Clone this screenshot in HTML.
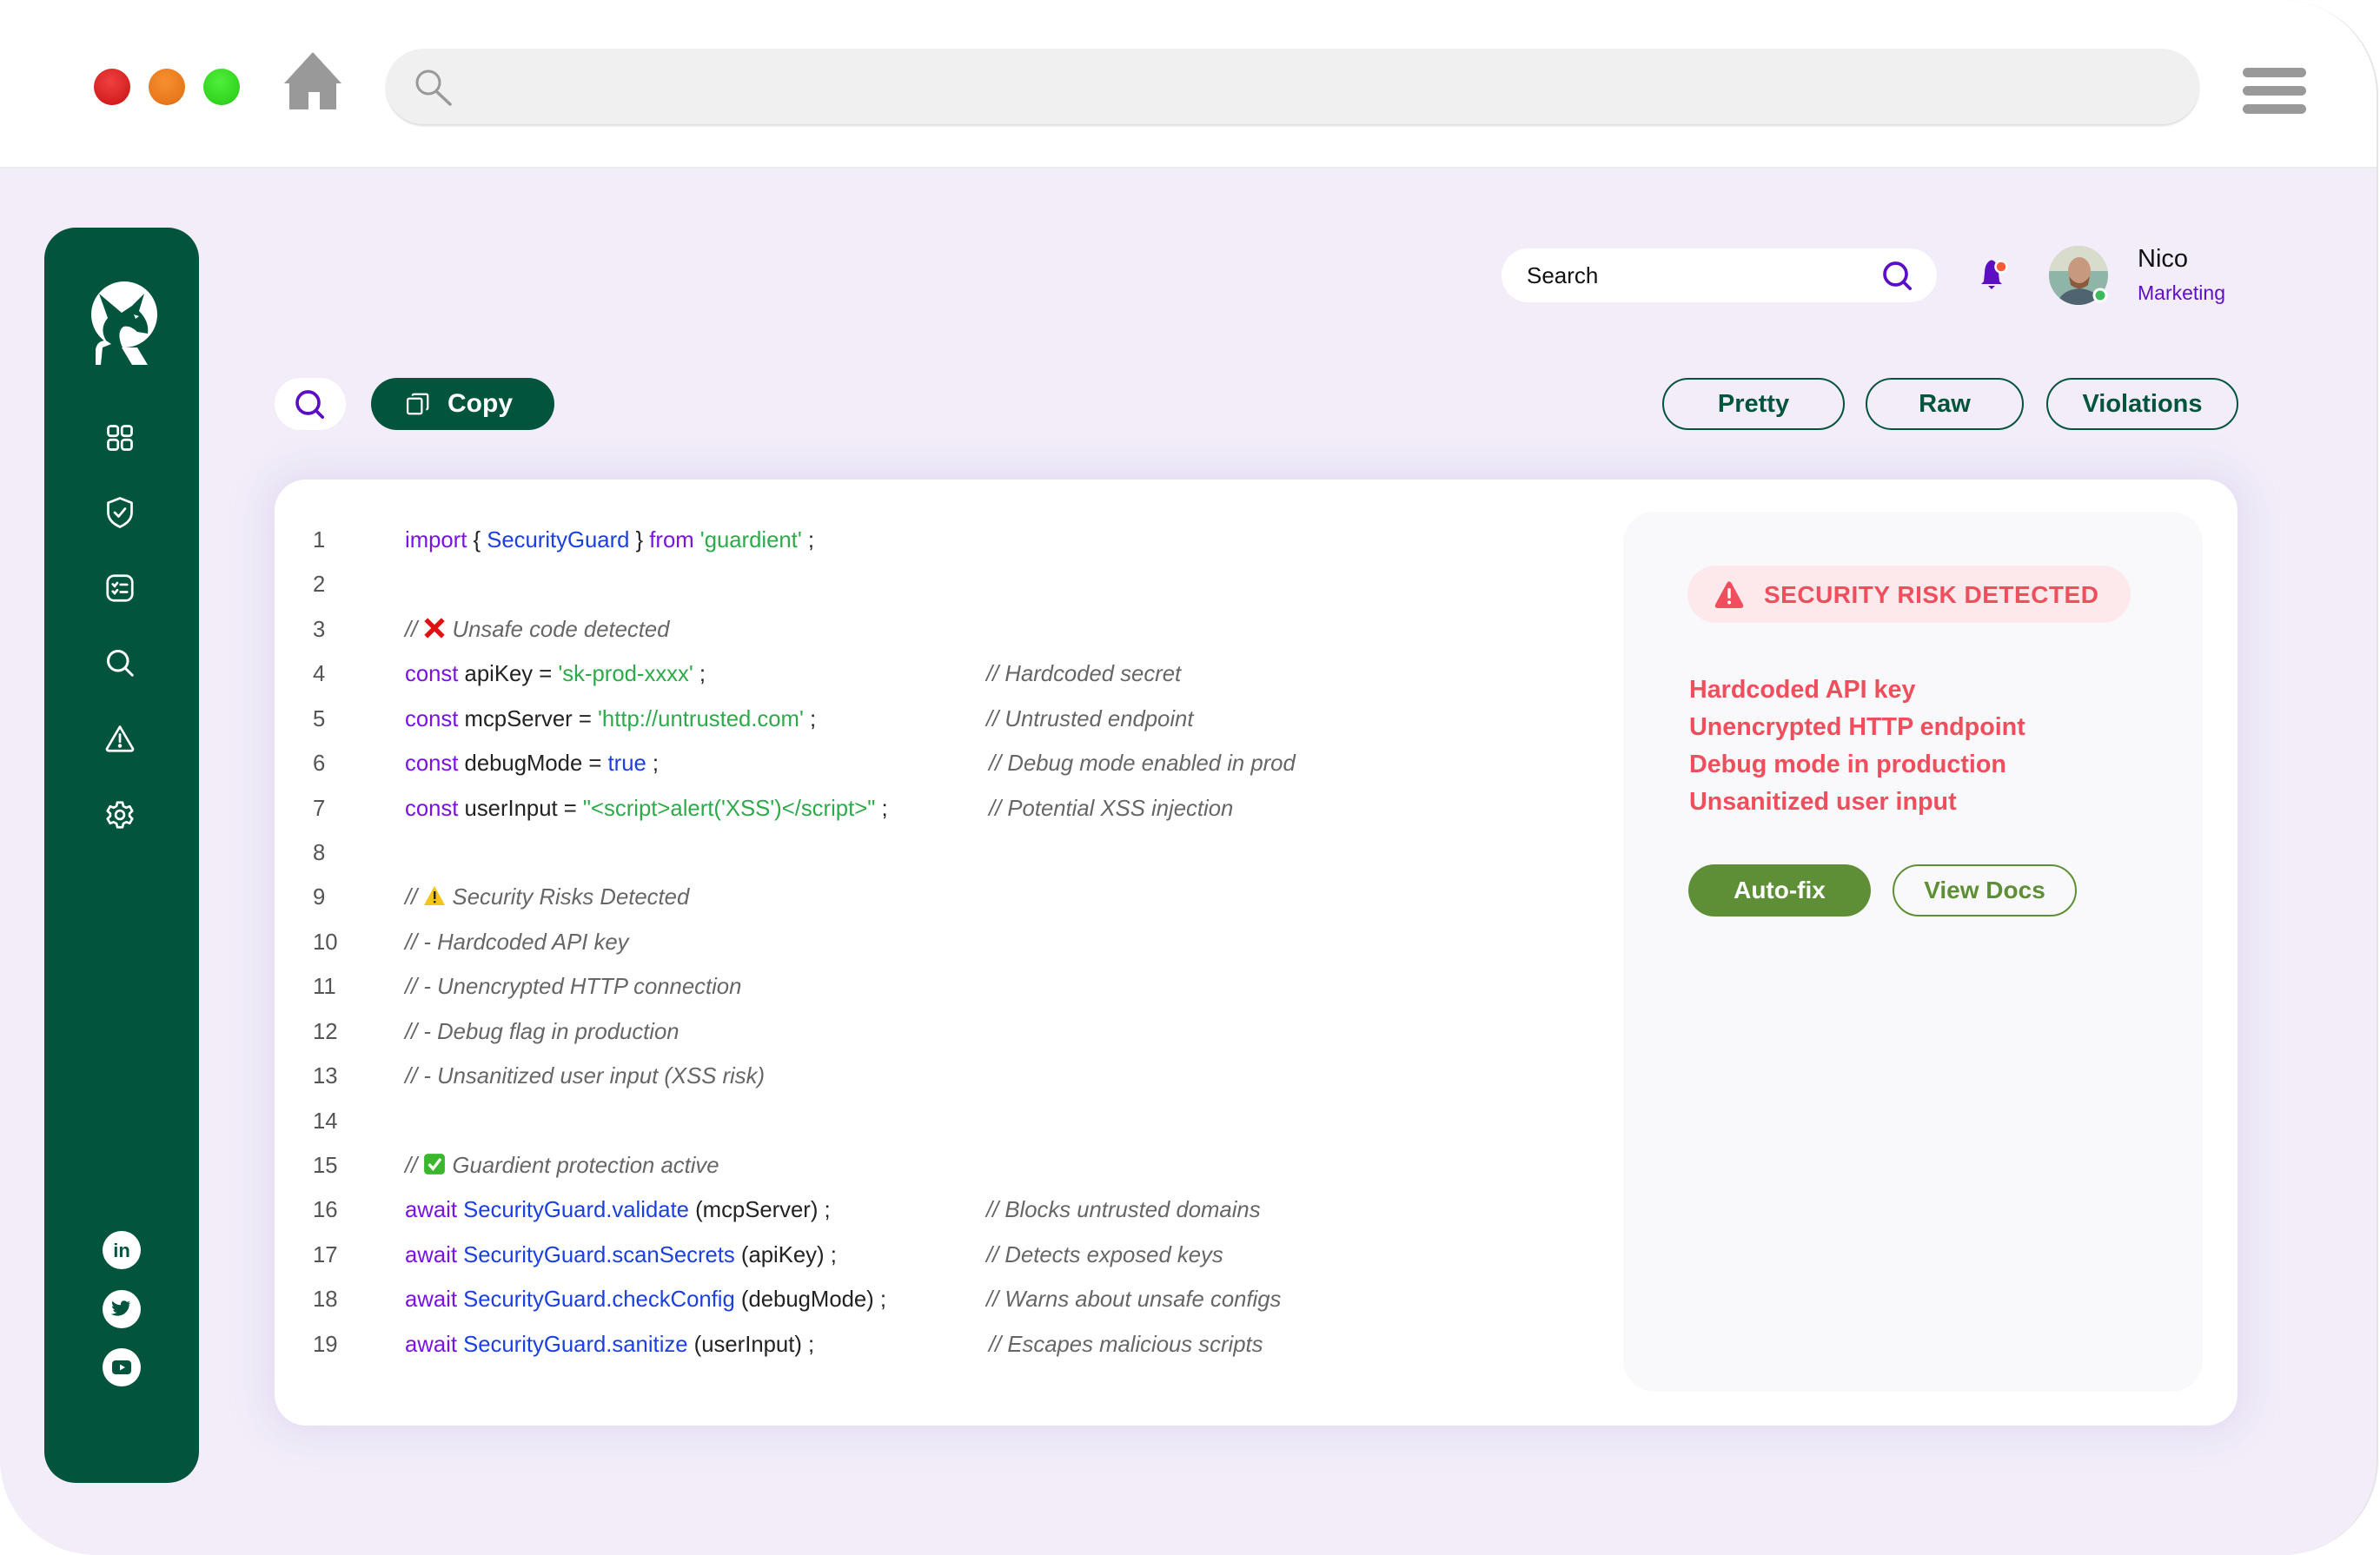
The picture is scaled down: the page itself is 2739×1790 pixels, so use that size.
<!DOCTYPE html>
<html><head><meta charset="utf-8">
<style>
*{margin:0;padding:0;box-sizing:border-box}
html,body{width:2739px;height:1790px;background:#fff;overflow:hidden;font-family:"Liberation Sans",Arial,sans-serif}
.abs{position:absolute}
#frame{position:absolute;left:0;top:0;width:2737px;height:1790px;border-radius:110px;overflow:hidden;background:#f2edf8;border-right:2px solid #e4e4e4}
#top{position:absolute;left:0;top:0;width:100%;height:194px;background:#fff;border-bottom:2px solid #ebebeb}
.dot{position:absolute;width:42px;height:42px;border-radius:50%;top:79px}
.ln{position:absolute;left:360px;width:60px;font-size:25.7px;color:#555;line-height:40px;top:2px}
.cd{position:absolute;left:466px;font-size:25.7px;color:#222;line-height:40px;white-space:pre;margin-top:2px}
.cm{position:absolute;left:1135px;font-size:25.7px;color:#666;font-style:italic;line-height:40px;white-space:pre;margin-top:2px}
.ln{margin-top:2px;top:auto}
.k{color:#7a12e6}.b{color:#1c3fe0}.s{color:#2eaa4a}.c{color:#666;font-style:italic}
.pill{position:absolute;top:435px;height:60px;border:2.5px solid #03543d;border-radius:30px;color:#03543d;font-weight:bold;font-size:29px;display:flex;align-items:center;justify-content:center}
.risk{position:absolute;left:1944px;font-size:28.7px;font-weight:bold;color:#f04e5c;line-height:40px}
</style></head><body>
<div id="frame">
 <div id="top">
  <div class="dot" style="left:108px;background:radial-gradient(circle at 45% 35%,#f04040,#d41f1f 70%,#a81414)"></div>
  <div class="dot" style="left:171px;background:radial-gradient(circle at 45% 35%,#f7902e,#e8771c 70%,#b85a10)"></div>
  <div class="dot" style="left:234px;background:radial-gradient(circle at 45% 35%,#4fef3a,#32d420 70%,#20a014)"></div>
  <svg class="abs" style="left:325px;top:58px" width="70" height="70" viewBox="0 0 70 70"><path d="M35 2 L68 38 L62 38 L62 68 L43 68 L43 48 L30 48 L30 68 L8 68 L8 38 L2 38 Z" fill="#999"/></svg>
  <div class="abs" style="left:444px;top:56px;width:2087px;height:87px;border-radius:44px;background:#f0f0f0;box-shadow:0 2px 2px #ddd"></div>
  <svg class="abs" style="left:474px;top:76px" width="50" height="50" viewBox="0 0 50 50"><circle cx="19" cy="19" r="13" fill="none" stroke="#999" stroke-width="3"/><line x1="28" y1="29" x2="44" y2="44" stroke="#999" stroke-width="3.5" stroke-linecap="round"/></svg>
  <div class="abs" style="left:2581px;top:78px;width:73px;height:11px;border-radius:6px;background:#999"></div>
  <div class="abs" style="left:2581px;top:99px;width:73px;height:11px;border-radius:6px;background:#999"></div>
  <div class="abs" style="left:2581px;top:120px;width:73px;height:11px;border-radius:6px;background:#999"></div>
 </div>

 <div class="abs" style="left:51px;top:262px;width:178px;height:1445px;border-radius:36px;background:#03543d"></div>
 <svg class="abs" style="left:100px;top:322px" width="86" height="100" viewBox="0 0 86 100">
  <circle cx="43" cy="40" r="38" fill="#fff"/>
  <path d="M14 16 L40 38 L52 30 L66 16 L60 36 Q72 48 70 62 L58 60 Q50 52 42 54 Q34 60 40 76 L52 98 L34 98 L22 70 Q14 56 24 44 Z" fill="#03543d"/>
  <path d="M54 40 L60 42 L56 45 Z" fill="#fff"/>
  <path d="M10 98 L10 80 Q12 70 22 70 L28 74 L18 78 L16 98 Z" fill="#fff"/>
  <path d="M40 78 L58 78 L70 98 L52 98 Z" fill="#fff"/>
 </svg>
 <svg class="abs" style="left:120px;top:486px" width="36" height="36" viewBox="0 0 24 24" fill="none" stroke="#fff" stroke-width="1.8"><rect x="3" y="3" width="7.5" height="7.5" rx="2"/><rect x="13.5" y="3" width="7.5" height="7.5" rx="2"/><rect x="3" y="13.5" width="7.5" height="7.5" rx="2"/><rect x="13.5" y="13.5" width="7.5" height="7.5" rx="2"/></svg>
 <svg class="abs" style="left:120px;top:570px" width="36" height="40" viewBox="0 0 24 26" fill="none" stroke="#fff" stroke-width="1.8" stroke-linejoin="round"><path d="M12 2 L21 5.5 V13 Q21 20 12 24 Q3 20 3 13 V5.5 Z"/><path d="M8 13 L11 16 L16 10" stroke-linecap="round"/></svg>
 <svg class="abs" style="left:120px;top:659px" width="36" height="36" viewBox="0 0 24 24" fill="none" stroke="#fff" stroke-width="1.8" stroke-linecap="round"><rect x="2.5" y="2.5" width="19" height="19" rx="5"/><path d="M6.5 9 L8 10.5 L10 8 M12.5 9.3 H17.5 M6.5 14.5 L8 16 L10 13.5 M12.5 15 H17.5"/></svg>
 <svg class="abs" style="left:120px;top:745px" width="36" height="36" viewBox="0 0 24 24" fill="none" stroke="#fff" stroke-width="2" stroke-linecap="round"><circle cx="10.5" cy="10.5" r="7.5"/><line x1="16" y1="16" x2="21.5" y2="21.5"/></svg>
 <svg class="abs" style="left:120px;top:832px" width="36" height="36" viewBox="0 0 24 24" fill="none" stroke="#fff" stroke-width="1.8" stroke-linecap="round" stroke-linejoin="round"><path d="M12 3 L22 20 Q22 21.5 20.5 21.5 H3.5 Q2 21.5 2 20 Z"/><line x1="12" y1="9" x2="12" y2="14.5"/><circle cx="12" cy="17.7" r=".6" fill="#fff"/></svg>
 <svg class="abs" style="left:120px;top:920px" width="36" height="36" viewBox="0 0 24 24" fill="none" stroke="#fff" stroke-width="1.8" stroke-linejoin="round"><path d="M10 2.5 H14 L14.6 5.3 L16.8 6.5 L19.5 5.5 L21.5 9 L19.4 11 V13 L21.5 15 L19.5 18.5 L16.8 17.5 L14.6 18.7 L14 21.5 H10 L9.4 18.7 L7.2 17.5 L4.5 18.5 L2.5 15 L4.6 13 V11 L2.5 9 L4.5 5.5 L7.2 6.5 L9.4 5.3 Z"/><circle cx="12" cy="12" r="3.3"/></svg>
 <svg class="abs" style="left:118px;top:1417px" width="44" height="44" viewBox="0 0 44 44"><circle cx="22" cy="22" r="22" fill="#fff"/><text x="22" y="30" text-anchor="middle" font-family="Liberation Sans" font-weight="bold" font-size="22" fill="#03543d">in</text></svg>
 <svg class="abs" style="left:118px;top:1485px" width="44" height="44" viewBox="0 0 44 44"><circle cx="22" cy="22" r="22" fill="#fff"/><path d="M33 14 Q31 15 29.5 15.3 Q31 14 31.5 12.5 Q30 13.5 28.3 13.8 Q26 11.5 23 12.6 Q20.5 14 21 17.3 Q15 17 11.5 12.7 Q10 16 13 18.8 Q12 18.8 11 18.3 Q11 21.5 14.3 22.6 Q13 23 12.2 22.7 Q13 25.6 16.3 25.8 Q13 28 9.5 27.6 Q18 32 25.5 27 Q31 22 30.7 16 Q32 15 33 14 Z" fill="#03543d"/></svg>
 <svg class="abs" style="left:118px;top:1552px" width="44" height="44" viewBox="0 0 44 44"><circle cx="22" cy="22" r="22" fill="#fff"/><rect x="11" y="14" width="22" height="16" rx="4" fill="#03543d"/><path d="M20 18.5 L26 22 L20 25.5 Z" fill="#fff"/></svg>

 <div class="abs" style="left:1728px;top:286px;width:501px;height:62px;border-radius:31px;background:#fff"></div>
 <div class="abs" style="left:1757px;top:302px;font-size:26px;color:#111">Search</div>
 <svg class="abs" style="left:2164px;top:298px" width="40" height="40" viewBox="0 0 24 24" fill="none" stroke="#5b0ec2" stroke-width="2.2" stroke-linecap="round"><circle cx="10.5" cy="10.5" r="7.5"/><line x1="16" y1="16" x2="20.5" y2="20.5"/></svg>
 <svg class="abs" style="left:2274px;top:296px" width="40" height="40" viewBox="0 0 40 40"><path d="M16 4 Q18 3 20 4 Q26 8 26 18 L27 28 L30 31 H6 L9 28 L10 18 Q10 8 16 4 Z" fill="#5b0ec2"/><path d="M14 33 H22 L18 37 Z" fill="#5b0ec2"/><circle cx="29" cy="11" r="6.5" fill="#ff5a36" stroke="#fff" stroke-width="2.5"/></svg>
 <svg class="abs" style="left:2357px;top:282px" width="72" height="72" viewBox="0 0 72 72"><defs><clipPath id="av"><circle cx="35" cy="35" r="34"/></clipPath></defs><g clip-path="url(#av)"><rect width="72" height="72" fill="#8fb4a8"/><rect x="0" y="0" width="72" height="30" fill="#d8dccc"/><ellipse cx="36" cy="30" rx="13" ry="16" fill="#c79a80"/><path d="M24 36 Q36 52 48 36 L46 46 Q36 54 26 46 Z" fill="#8a5a3c"/><path d="M10 72 Q12 52 36 50 Q60 52 62 72 Z" fill="#4f6470"/></g><circle cx="60" cy="58" r="7" fill="#3cba5c" stroke="#fff" stroke-width="3"/></svg>
 <div class="abs" style="left:2460px;top:282px;font-size:29px;color:#111">Nico</div>
 <div class="abs" style="left:2460px;top:324px;font-size:23px;color:#6010c4">Marketing</div>

 <div class="abs" style="left:316px;top:435px;width:82px;height:60px;border-radius:30px;background:#fff"></div>
 <svg class="abs" style="left:337px;top:446px" width="40" height="40" viewBox="0 0 24 24" fill="none" stroke="#5b0ec2" stroke-width="2.2" stroke-linecap="round"><circle cx="10.5" cy="10.5" r="7.5"/><line x1="16" y1="16" x2="20.5" y2="20.5"/></svg>
 <div class="abs" style="left:427px;top:435px;width:211px;height:60px;border-radius:30px;background:#03543d"></div>
 <svg class="abs" style="left:466px;top:450px" width="30" height="30" viewBox="0 0 24 24" fill="none" stroke="#fff" stroke-width="1.8"><rect x="2.5" y="7" width="13" height="14" rx="1.5"/><path d="M7 4.5 Q7 3 8.5 3 H19.5 Q21 3 21 4.5 V15.5 Q21 17 19.5 17"/></svg>
 <div class="abs" style="left:515px;top:448px;font-size:30px;font-weight:bold;color:#fff">Copy</div>
 <div class="pill" style="left:1913px;width:210px">Pretty</div>
 <div class="pill" style="left:2147px;width:182px">Raw</div>
 <div class="pill" style="left:2355px;width:221px">Violations</div>

 <div class="abs" style="left:316px;top:552px;width:2259px;height:1089px;border-radius:36px;background:#fff;box-shadow:0 0 40px 10px rgba(200,190,235,.35)"></div>

 <div class="ln" style="top:600px">1</div><div class="cd" style="top:600px"><span class="k">import</span> { <span class="b">SecurityGuard</span> } <span class="k">from</span> <span class="s">'guardient'</span> ;</div>
 <div class="ln" style="top:651px">2</div>
 <div class="ln" style="top:703px">3</div><div class="cd c" style="top:703px">// <svg width="26" height="26" viewBox="0 0 24 24" style="vertical-align:-3px"><path d="M3 3 L21 21 M21 3 L3 21" stroke="#e01010" stroke-width="5"/></svg> Unsafe code detected</div>
 <div class="ln" style="top:754px">4</div><div class="cd" style="top:754px"><span class="k">const</span> apiKey = <span class="s">'sk-prod-xxxx'</span> ;</div><div class="cm" style="top:754px">// Hardcoded secret</div>
 <div class="ln" style="top:806px">5</div><div class="cd" style="top:806px"><span class="k">const</span> mcpServer = <span class="s">'http://untrusted.com'</span> ;</div><div class="cm" style="top:806px">// Untrusted endpoint</div>
 <div class="ln" style="top:857px">6</div><div class="cd" style="top:857px"><span class="k">const</span> debugMode = <span class="b">true</span> ;</div><div class="cm" style="top:857px;left:1138px">// Debug mode enabled in prod</div>
 <div class="ln" style="top:909px">7</div><div class="cd" style="top:909px"><span class="k">const</span> userInput = <span class="s">"&lt;script&gt;alert('XSS')&lt;/script&gt;"</span> ;</div><div class="cm" style="top:909px;left:1138px">// Potential XSS injection</div>
 <div class="ln" style="top:960px">8</div>
 <div class="ln" style="top:1011px">9</div><div class="cd c" style="top:1011px">// <svg width="26" height="24" viewBox="0 0 26 24" style="vertical-align:-2px"><path d="M13 1 L25 23 H1 Z" fill="#f7c31a"/><rect x="12" y="7" width="2.4" height="9" fill="#222"/><rect x="12" y="18" width="2.4" height="2.4" fill="#222"/></svg> Security Risks Detected</div>
 <div class="ln" style="top:1063px">10</div><div class="cd c" style="top:1063px">// - Hardcoded API key</div>
 <div class="ln" style="top:1114px">11</div><div class="cd c" style="top:1114px">// - Unencrypted HTTP connection</div>
 <div class="ln" style="top:1166px">12</div><div class="cd c" style="top:1166px">// - Debug flag in production</div>
 <div class="ln" style="top:1217px">13</div><div class="cd c" style="top:1217px">// - Unsanitized user input (XSS risk)</div>
 <div class="ln" style="top:1269px">14</div>
 <div class="ln" style="top:1320px">15</div><div class="cd c" style="top:1320px">// <svg width="26" height="26" viewBox="0 0 24 24" style="vertical-align:-3px"><rect x="1" y="1" width="22" height="22" rx="4" fill="#3bb72e"/><path d="M6 12 L10.5 17 L18.5 6.5" fill="none" stroke="#fff" stroke-width="3"/></svg> Guardient protection active</div>
 <div class="ln" style="top:1371px">16</div><div class="cd" style="top:1371px"><span class="k">await</span> <span class="b">SecurityGuard.validate</span> (mcpServer) ;</div><div class="cm" style="top:1371px">// Blocks untrusted domains</div>
 <div class="ln" style="top:1423px">17</div><div class="cd" style="top:1423px"><span class="k">await</span> <span class="b">SecurityGuard.scanSecrets</span> (apiKey) ;</div><div class="cm" style="top:1423px">// Detects exposed keys</div>
 <div class="ln" style="top:1474px">18</div><div class="cd" style="top:1474px"><span class="k">await</span> <span class="b">SecurityGuard.checkConfig</span> (debugMode) ;</div><div class="cm" style="top:1474px">// Warns about unsafe configs</div>
 <div class="ln" style="top:1526px">19</div><div class="cd" style="top:1526px"><span class="k">await</span> <span class="b">SecurityGuard.sanitize</span> (userInput) ;</div><div class="cm" style="top:1526px;left:1138px">// Escapes malicious scripts</div>

 <div class="abs" style="left:1868px;top:589px;width:667px;height:1013px;border-radius:36px;background:#f9f9fb"></div>
 <div class="abs" style="left:1942px;top:651px;width:510px;height:66px;border-radius:33px;background:#fde8ec"></div>
 <svg class="abs" style="left:1972px;top:668px" width="36" height="33" viewBox="0 0 36 33"><path d="M15.5 3 Q18 -0.5 20.5 3 L34 28 Q35 32 31 32 H5 Q1 32 2 28 Z" fill="#f04e5c"/><rect x="16.3" y="9" width="3.4" height="12" rx="1.5" fill="#fff"/><circle cx="18" cy="25.5" r="2" fill="#fff"/></svg>
 <div class="abs" style="left:2030px;top:669px;font-size:28px;font-weight:bold;color:#f04e5c;letter-spacing:.5px">SECURITY RISK DETECTED</div>
 <div class="risk" style="top:774px">Hardcoded API key</div>
 <div class="risk" style="top:817px">Unencrypted HTTP endpoint</div>
 <div class="risk" style="top:860px">Debug mode in production</div>
 <div class="risk" style="top:903px">Unsanitized user input</div>
 <div class="abs" style="left:1943px;top:995px;width:210px;height:60px;border-radius:30px;background:#5e8f37;color:#fff;font-weight:bold;font-size:28px;display:flex;align-items:center;justify-content:center">Auto-fix</div>
 <div class="abs" style="left:2178px;top:995px;width:212px;height:60px;border-radius:30px;border:2px solid #5e8f37;color:#5e8f37;font-weight:bold;font-size:28px;display:flex;align-items:center;justify-content:center">View Docs</div>
</div>
</body></html>
